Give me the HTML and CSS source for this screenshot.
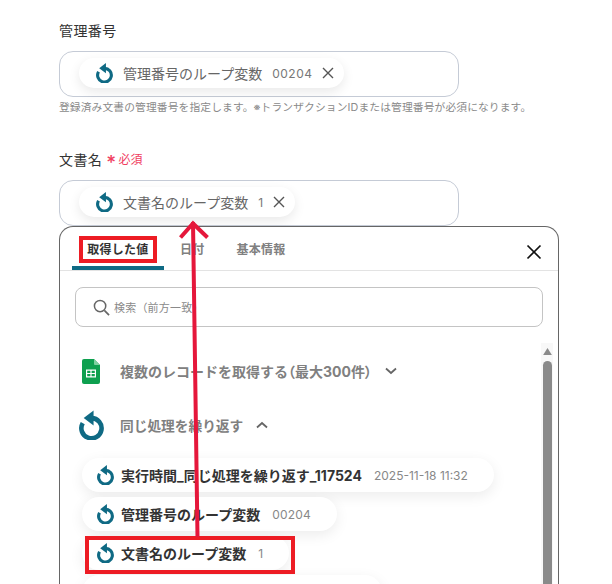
FILE: index.html
```html
<!DOCTYPE html>
<html lang="ja">
<head>
<meta charset="utf-8">
<title>文書名</title>
<link rel="stylesheet" href="styles.css">
</head>
<body>
<svg class="defs" width="0" height="0" aria-hidden="true">
  <symbol id="loop" viewBox="0 0 24 28">
    <path d="M12 7.400a9.700 9.700 0 1 1-8.400 4.800" fill="none" stroke="currentColor" stroke-width="4.400"/>
    <path d="M14 0v14.500L4.500 7.200z" fill="currentColor"/>
  </symbol>
  <symbol id="cross" viewBox="0 0 12 12">
    <path d="M1 1l10 10M11 1L1 11" fill="none" stroke="currentColor" stroke-width="1.400"/>
  </symbol>
</svg>
<main class="page">
  <section class="field first">
    <label class="label">管理番号</label>
    <div class="input">
      <span class="chip"><svg class="ico"><use href="#loop"/></svg><span class="chip-name">管理番号のループ変数</span><span class="chip-val wide">00204</span><svg class="x"><use href="#cross"/></svg></span>
    </div>
    <p class="help">登録済み文書の管理番号を指定します。※トランザクションIDまたは管理番号が必須になります。</p>
  </section>
  <section class="field second">
    <label class="label">文書名<span class="star">*</span><span class="req">必須</span></label>
    <div class="input">
      <span class="chip"><svg class="ico"><use href="#loop"/></svg><span class="chip-name">文書名のループ変数</span><span class="chip-val">1</span><svg class="x"><use href="#cross"/></svg></span>
    </div>
  </section>
  <section class="panel">
    <div class="tabs">
      <span class="tab active">取得した値</span>
      <span class="tab">日付</span>
      <span class="tab">基本情報</span>
      <svg class="close" viewBox="0 0 16 16"><path d="M1.500 1.500l13 13M14.500 1.500l-13 13" fill="none" stroke="#111" stroke-width="1.700"/></svg>
    </div>
    <div class="search">
      <svg class="lens" viewBox="0 0 18 18"><circle cx="7.500" cy="7.500" r="6" fill="none" stroke="#666" stroke-width="1.600"/><path d="M12 12l5 5" stroke="#666" stroke-width="1.800" fill="none"/></svg>
      <span>検索（前方一致）</span>
    </div>
    <div class="scroll">
      <div class="group sheet">
        <svg class="sheet-ico" viewBox="0 0 18 25"><path d="M2 0h10l6 6v17a2 2 0 0 1-2 2H2a2 2 0 0 1-2-2V2a2 2 0 0 1 2-2z" fill="#0ea04f"/><path d="M12 0l6 6h-5a1 1 0 0 1-1-1z" fill="#7fd0a0"/><path d="M4 10.500h10v8H4z" fill="#fff"/><path d="M5.200 11.700h3.200v2.200H5.200zM9.600 11.700h3.200v2.200H9.600zM5.200 15.100h3.200v2.200H5.200zM9.600 15.100h3.200v2.200H9.600z" fill="#0ea04f"/></svg>
        <span class="group-name">複数のレコードを取得する<span class="palt">（</span>最大300件<span class="palt">）</span></span>
        <svg class="chev" viewBox="0 0 12 8"><path d="M1 1.500l5 4.500 5-4.500" fill="none" stroke="#666" stroke-width="1.800"/></svg>
      </div>
      <div class="group loop">
        <svg class="loop-ico"><use href="#loop"/></svg>
        <span class="group-name">同じ処理を繰り返す</span>
        <svg class="chev" viewBox="0 0 12 8"><path d="M1 6.500l5-4.500 5 4.500" fill="none" stroke="#666" stroke-width="1.800"/></svg>
      </div>
      <ul class="items">
        <li class="item"><svg class="ico"><use href="#loop"/></svg><b>実行時間_同じ処理を繰り返す_117524</b><span class="val date">2025-11-18 11:32</span></li>
        <li class="item"><svg class="ico"><use href="#loop"/></svg><b>管理番号のループ変数</b><span class="val">00204</span></li>
        <li class="item"><svg class="ico"><use href="#loop"/></svg><b>文書名のループ変数</b><span class="val">1</span></li>
        <li class="item blank"></li>
      </ul>
      <div class="bar">
        <svg class="bar-up" viewBox="0 0 10 8"><path d="M5 0l5 8H0z" fill="#8a8a8a"/></svg>
        <div class="thumb"></div>
      </div>
    </div>
  </section>
</main>
<div class="mark mark-tab"></div>
<div class="mark mark-item"></div>
<svg class="arrow" viewBox="0 0 612 584"><path d="M197.500 537L193 222M180.500 237.500L193 223.500 207.500 237.500" fill="none" stroke="#e5173b" stroke-width="4"/></svg>
</body>
</html>
```
FILE: styles.css
```css
* { box-sizing: border-box; }
html, body { margin: 0; height: 584px; overflow: hidden; background: #fff; }
body { position: relative; font-family: Inter, "Noto Sans CJK JP", sans-serif; color: #333; }
.defs { position: absolute; }
.page { padding-left: 59px; width: 560px; height: 584px; overflow: hidden; display: flex; flex-direction: column; }
.field { flex: none; }
.field.first { padding-top: 21px; }
.field.second { margin-top: 34px; }
.label { display: flex; align-items: center; height: 20px; font-size: 14px; line-height: 20px; letter-spacing: .4px; color: #333; }
.star { color: #f0405f; font-size: 19px; font-weight: 500; margin: 5px 2px 0 4px; line-height: 14px; height: 14px; }
.req { color: #f0405f; font-size: 12px; letter-spacing: 0; }
.input { width: 400px; height: 46px; margin-top: 10px; border: 1px solid #c5cbd6; border-radius: 14px; padding: 6px 0 0 19px; }
.chip { display: inline-flex; align-items: center; height: 30px; padding: 0 10px 0 17px; border-radius: 15px; background: #fff; box-shadow: 0 4px 12px rgba(0,0,0,.09); color: #666; }
.ico { width: 17px; height: 20px; color: #0f6a84; flex: none; }
.chip .ico { margin-right: 10px; }
.chip-name { font-size: 14px; }
.chip-val { font-size: 12px; margin-left: 10px; letter-spacing: .3px; color: #777; }
.chip-val.wide { letter-spacing: .5px; }
.x { width: 12px; height: 12px; margin-left: 10px; color: #555; }
.help { margin: 3px 0 0; font-size: 10.75px; line-height: 16px; color: #8a8a8a; letter-spacing: .12px; white-space: nowrap; }
.panel { flex: none; width: 500px; height: 420px; border: 1px solid #666; border-bottom: 0; border-radius: 14px 14px 0 0; background: #fff; position: relative; }
.tabs { display: flex; align-items: flex-start; height: 44px; padding-left: 12px; border-bottom: 1px solid #e3e3e3; position: relative; }
.tab { height: 43px; font-size: 12px; font-weight: 700; letter-spacing: .25px; line-height: 46px; color: #808080; white-space: nowrap; margin-left: 32px; }
.tab.active { width: 92px; margin-left: 0; text-align: center; color: #333; border-bottom: 4px solid #0f6a84; border-radius: 3px 3px 0 0; }
.tab.active + .tab { margin-left: 16px; }
.close { position: absolute; right: 16px; top: 17px; width: 16px; height: 16px; }
.search { display: flex; align-items: center; gap: 4px; width: 468px; height: 40px; margin: 16px 0 0 15px; padding-left: 17px; border: 1px solid #c4c4c4; border-radius: 8px; font-size: 11px; letter-spacing: .2px; color: #8a8a8a; }
.lens { width: 17px; height: 17px; }
.scroll { position: relative; height: 300px; display: flow-root; }
.group { display: flex; align-items: center; font-size: 13.7px; font-weight: 700; color: #808080; }
.group-name { white-space: nowrap; }
.palt { font-feature-settings: "palt"; }
.sheet { margin: 31px 0 0 22px; height: 26px; font-size: 14px; }
.sheet-ico { width: 18px; height: 25px; margin-right: 20px; flex: none; }
.chev { width: 12px; height: 8px; margin-left: 13px; }
.loop { margin: 26px 0 0 19px; height: 30px; }
.loop-ico { width: 25px; height: 30px; color: #0f6a84; margin-right: 16px; flex: none; }
.items { list-style: none; margin: 18px 0 0 22px; padding: 0; display: flex; flex-direction: column; align-items: flex-start; gap: 5px; }
.item { display: flex; align-items: center; height: 34px; padding: 0 26px 0 15px; border-radius: 17px; background: #fff; box-shadow: 0 4px 14px rgba(0,0,0,.08); font-size: 14px; white-space: nowrap; }
.item .ico { margin-right: 7px; }
.item b { color: #333; font-weight: 700; }
.val { font-size: 12px; color: #888; margin-left: 12px; letter-spacing: .2px; }
.val.date { letter-spacing: 0; }
.blank { width: 300px; }
.bar { position: absolute; right: 5px; top: 16px; width: 12px; height: 280px; background: #f8f8f8; display: flex; flex-direction: column; align-items: center; }
.bar-up { width: 9px; height: 7px; margin-top: 5px; }
.thumb { width: 9px; height: 260px; margin-top: 6px; background: #8a8a8a; border-radius: 5px 5px 0 0; }
.mark { position: absolute; border: 4px solid #ed1c24; }
.mark-tab { left: 79px; top: 236px; width: 78px; height: 27px; }
.mark-item { left: 85px; top: 536px; width: 210px; height: 38px; }
.arrow { position: absolute; left: 0; top: 0; width: 612px; height: 584px; pointer-events: none; }
```
